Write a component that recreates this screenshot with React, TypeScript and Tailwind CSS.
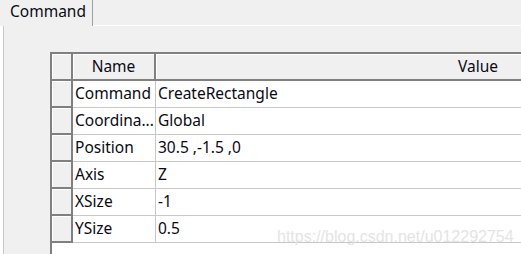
import React from "react";

const rows: [string, string][] = [
  ["Command", "CreateRectangle"],
  ["Coordina...", "Global"],
  ["Position", "30.5 ,-1.5 ,0"],
  ["Axis", "Z"],
  ["XSize", "-1"],
  ["YSize", "0.5"],
];

export default function App() {
  return (
    <div className="relative w-[521px] h-[254px] overflow-hidden bg-[#f0f0f0] text-[#0a0a14] font-['Noto_Sans',sans-serif] text-[15.5px] leading-none">
      {/* tab strip */}
      <div className="flex h-[26px]">
        <div className="shrink-0 w-[93px] h-[26px] box-border border-r border-[#a0a0a0] flex items-center pl-[10px] pb-[2px] text-[15.5px]">
          Command
        </div>
        <div className="flex-1 flex flex-col justify-end">
          <div className="h-[1px] bg-white" />
        </div>
      </div>
      <div className="flex h-[228px]">
        <div className="shrink-0 w-[3px] h-full bg-white" />
        <div className="shrink-0 w-[1px] h-full bg-[#c8c8c8]" />
        <div className="shrink-0 pl-[46px] pt-[26px]">
          <div className="w-[750px] h-[300px] box-border border-l-2 border-t-2 border-[#808080] flex flex-col">
            {/* header */}
            <div className="flex h-[27px] box-border border-b-2 border-[#808080] bg-[#f0f0f0]">
              <div className="shrink-0 w-[21px] h-full box-border border-r-2 border-[#808080] shadow-[inset_1px_1px_0_#ffffff]" />
              <div className="shrink-0 w-[83px] h-full box-border border-r-2 border-[#808080] shadow-[inset_1px_1px_0_#ffffff] flex items-center justify-center">
                Name
              </div>
              <div className="flex-1 h-full shadow-[inset_1px_1px_0_#ffffff] flex items-center justify-center">
                Value
              </div>
            </div>
            {rows.map(([n, v]) => (
              <div key={n} className="flex h-[27px]">
                <div className="shrink-0 w-[21px] h-full box-border border-r-2 border-b-2 border-[#808080] bg-[#f0f0f0] shadow-[inset_1px_1px_0_#ffffff]" />
                <div className="shrink-0 w-[83px] h-full box-border border-r border-b border-[#c8c8c8] bg-white flex items-center pl-[2px] whitespace-nowrap overflow-hidden">
                  {n}
                </div>
                <div className="flex-1 h-full box-border border-b border-[#c8c8c8] bg-white flex items-center pl-[2px] whitespace-nowrap">
                  {v}
                </div>
              </div>
            ))}
            <div className="flex-1 bg-white" />
          </div>
        </div>
      </div>
      <div className="absolute left-[277px] top-[228px] font-['Liberation_Sans',Arial,sans-serif] text-[16px] leading-[18px] text-[#e4e4e4] whitespace-nowrap">
        https://blog.csdn.net/u012292754
      </div>
    </div>
  );
}
